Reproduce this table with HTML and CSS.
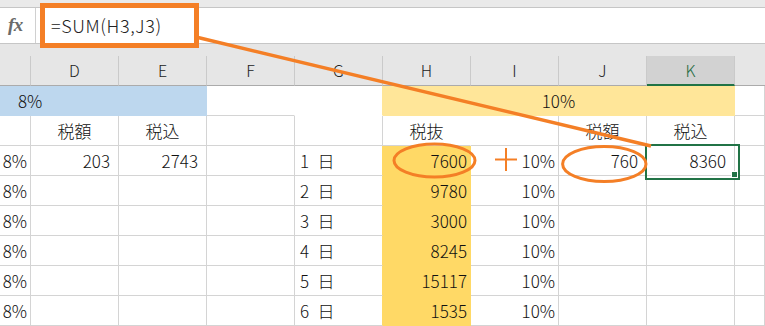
FILE: index.html
```html
<!DOCTYPE html>
<html lang="ja">
<head>
<meta charset="utf-8">
<link rel="stylesheet" href="styles.css">
</head>
<body>
<div class="app">
  <div class="topstrip"></div>
  <div class="formula-bar">
    <div class="fx">fx</div>
    <div class="formula">=SUM(H3,J3)</div>
  </div>
  <div class="gap"></div>
  <div class="sheet">
    <div class="h"></div><div class="h">D</div><div class="h">E</div><div class="h">F</div><div class="h">G</div><div class="h">H</div><div class="h">I</div><div class="h">J</div><div class="h hk">K</div><div class="h hl"></div>

    <div class="c blue span3">8%</div><div class="c f1"></div><div class="c g1"></div><div class="c ly span4">10%</div><div class="c"></div>

    <div class="c"></div><div class="c ctr">税額</div><div class="c ctr">税込</div><div class="c"></div><div class="c g2"></div><div class="c ctr h2">税抜</div><div class="c"></div><div class="c ctr">税額</div><div class="c ctr">税込</div><div class="c"></div>

    <div class="c pct">8%</div><div class="c num">203</div><div class="c num">2743</div><div class="c"></div><div class="c day gy">1&ensp;日</div><div class="c pct yel">7600</div><div class="c pct">10%</div><div class="c num">760</div><div class="c num sel">8360</div><div class="c"></div>

    <div class="c pct">8%</div><div class="c"></div><div class="c"></div><div class="c"></div><div class="c day gy">2&ensp;日</div><div class="c pct yel">9780</div><div class="c pct">10%</div><div class="c"></div><div class="c"></div><div class="c"></div>

    <div class="c pct">8%</div><div class="c"></div><div class="c"></div><div class="c"></div><div class="c day gy">3&ensp;日</div><div class="c pct yel">3000</div><div class="c pct">10%</div><div class="c"></div><div class="c"></div><div class="c"></div>

    <div class="c pct">8%</div><div class="c"></div><div class="c"></div><div class="c"></div><div class="c day gy">4&ensp;日</div><div class="c pct yel">8245</div><div class="c pct">10%</div><div class="c"></div><div class="c"></div><div class="c"></div>

    <div class="c pct">8%</div><div class="c"></div><div class="c"></div><div class="c"></div><div class="c day gy">5&ensp;日</div><div class="c pct yel">15117</div><div class="c pct">10%</div><div class="c"></div><div class="c"></div><div class="c"></div>

    <div class="c pct">8%</div><div class="c"></div><div class="c"></div><div class="c"></div><div class="c day gy">6&ensp;日</div><div class="c pct yel">1535</div><div class="c pct">10%</div><div class="c"></div><div class="c"></div><div class="c"></div>
  </div>

  <svg class="overlay" width="765" height="326" viewBox="0 0 765 326">
    <rect x="42.5" y="5.5" width="154" height="40" fill="none" stroke="#F47F26" stroke-width="5"/>
    <line x1="198" y1="37.5" x2="651" y2="146" stroke="#F47F26" stroke-width="3.4"/>
    <ellipse cx="434.5" cy="160.5" rx="40.5" ry="16.5" fill="none" stroke="#F47F26" stroke-width="3"/>
    <ellipse cx="604.3" cy="164" rx="41.7" ry="17.5" fill="none" stroke="#F47F26" stroke-width="3"/>
    <line x1="495" y1="159.5" x2="517" y2="159.5" stroke="#F47F26" stroke-width="2"/>
    <line x1="506" y1="148" x2="506" y2="171" stroke="#F47F26" stroke-width="2"/>
  </svg>
</div>
</body>
</html>
```

FILE: styles.css
```css
* { box-sizing: border-box; }
html, body { margin: 0; padding: 0; background: #fff; }
.app {
  position: relative;
  width: 765px;
  height: 326px;
  overflow: hidden;
  font-family: "Noto Sans CJK JP", "Noto Sans", sans-serif;
  font-weight: 300;
  color: #111;
}
.topstrip {
  height: 8px;
  background: #EAEAEA;
  border-bottom: 1px solid #C6C6C6;
}
.formula-bar {
  height: 36px;
  display: flex;
  background: #fff;
  border-bottom: 1px solid #C6C6C6;
}
.fx {
  width: 36px;
  border-right: 1px solid #D0D0D0;
  font-family: "Liberation Serif", serif;
  font-style: italic;
  font-weight: 700;
  font-size: 19px;
  color: #6A6A6A;
  line-height: 33px;
  padding-left: 8px;
  letter-spacing: -0.5px;
}
.formula {
  flex: 1;
  margin-left: 4px;
  padding-left: 11px;
  font-size: 18px;
  line-height: 35px;
  letter-spacing: 0.6px;
  color: #222;
}
.gap {
  height: 12px;
  background: #E6E6E6;
}
.sheet {
  display: grid;
  grid-template-columns: 31px repeat(8, 88px) 30px;
  grid-auto-rows: 30px;
}
.h {
  background: #E6E6E6;
  border-right: 1px solid #CACACA;
  border-bottom: 1px solid #ABABAB;
  font-size: 16px;
  line-height: 29px;
  text-align: center;
  color: #222;
}
.h.hk {
  background: #D2D2D2;
  color: #1E6B41;
  border-bottom: 2px solid #217346;
}
.h.hl { border-right: none; }
.c {
  border-right: 1px solid #D4D4D4;
  border-bottom: 1px solid #D4D4D4;
  font-size: 17px;
  line-height: 29px;
  white-space: nowrap;
  background: #fff;
}
.span3 { grid-column: span 3; }
.span4 { grid-column: span 4; }
.blue {
  background: #BDD7EE;
  border-color: transparent;
  padding-left: 18px;
}
.ly {
  background: #FFE699;
  border-color: transparent;
  text-align: center;
}
.f1 { border-right-color: #fff; }
.g1 { border-right-color: #FFE699; border-bottom-color: #fff; }
.h2 { border-right-color: #fff; }
.ctr { text-align: center; }
.num { text-align: right; padding-right: 8px; }
.pct { text-align: right; padding-right: 3px; }
.day { padding-left: 5px; }
.gy { border-right-color: #FFD966; }
.yel {
  background: #FFD966;
  border-color: transparent;
}
.sel { position: relative; }
.sel::after {
  content: "";
  position: absolute;
  left: -2px;
  top: -2px;
  width: 91px;
  height: 32px;
  border: 2px solid #217346;
}
.sel::before {
  content: "";
  position: absolute;
  left: 85px;
  top: 26px;
  width: 5px;
  height: 5px;
  background: #217346;
  outline: 1px solid #fff;
  z-index: 1;
}
.overlay {
  position: absolute;
  left: 0;
  top: 0;
  pointer-events: none;
}
```
